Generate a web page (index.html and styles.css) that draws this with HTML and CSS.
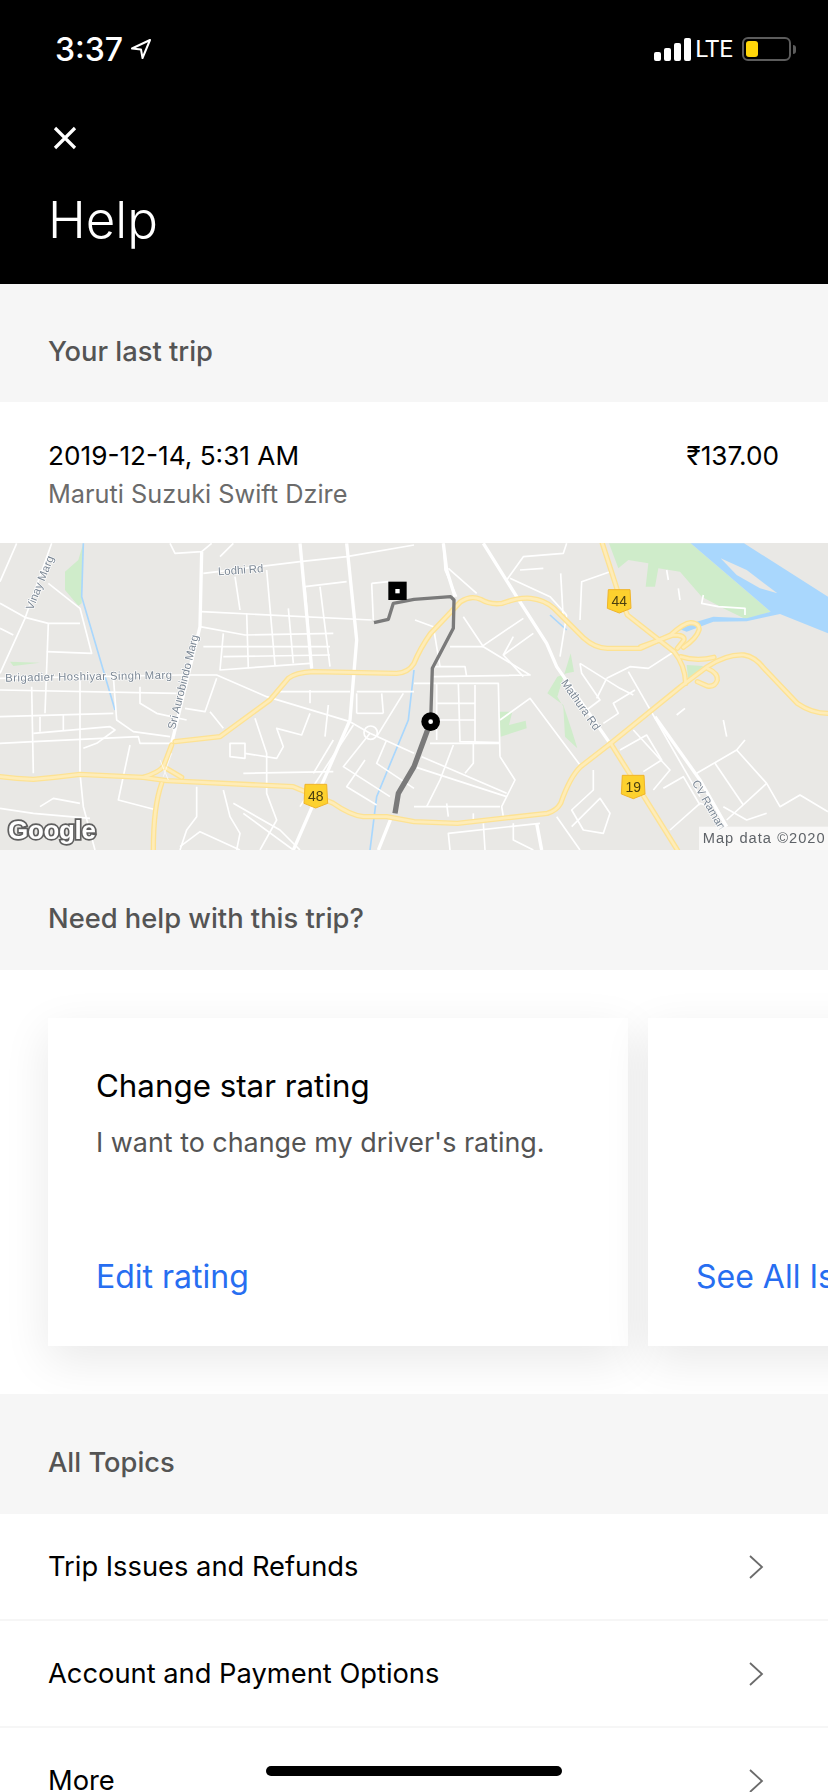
FILE: index.html
```html
<!DOCTYPE html>
<html lang="en">
<head>
    <meta charset="UTF-8">
    <meta name="viewport" content="width=device-width, initial-scale=1.0">
    <title>Help</title>
    <link rel="stylesheet" href="styles.css">
</head>
<body>
    <div class="screen">
        <header class="header">
            <div class="status-bar">
                <div class="status-left">
                    <span class="time">3:37</span>
                    <svg class="location" width="22" height="22" viewBox="0 0 22 22"><path d="M20 2 L2 10.5 L11 11.5 L12.5 20 Z" fill="none" stroke="#fff" stroke-width="2" stroke-linejoin="round"/></svg>
                </div>
                <div class="status-right">
                    <div class="signal">
                        <span class="bar bar-1"></span>
                        <span class="bar bar-2"></span>
                        <span class="bar bar-3"></span>
                        <span class="bar bar-4"></span>
                    </div>
                    <span class="lte">LTE</span>
                    <div class="battery"><span class="battery-level"></span></div>
                    <span class="battery-cap"></span>
                </div>
            </div>
            <svg class="close" width="26" height="26" viewBox="0 0 26 26"><path d="M3 3 L23 23 M23 3 L3 23" stroke="#fff" stroke-width="3.2" fill="none"/></svg>
            <h1 class="title">Help</h1>
        </header>

        <div class="section-head">Your last trip</div>

        <div class="trip">
            <div>
                <div class="trip-date">2019-12-14, 5:31 AM</div>
                <div class="trip-car">Maruti Suzuki Swift Dzire</div>
            </div>
            <div class="trip-price">₹137.00</div>
        </div>

        <svg class="map" width="828" height="307" viewBox="0 9 2484 921">
            <defs>
                <g id="highways">
                    <path d="M0 710 Q50 716 100 718 Q170 712 240 703 L430 712 Q475 698 490 680 L515 615"/>
                    <path d="M430 712 L500 722 L880 740 L1000 790 Q1050 825 1090 830 L1160 830 L1242 845 L1372 850 L1642 820 Q1670 812 1682 790 Q1710 710 1742 680 L1832 610 L2042 440 L2122 380 Q2180 342 2232 345 Q2265 350 2292 385 L2392 490 Q2435 520 2484 520"/>
                    <path d="M525 605 L660 590 L810 480 L865 415 Q885 398 940 395 L1190 400 Q1225 398 1242 370 Q1260 325 1292 280 L1382 185 Q1412 165 1442 178 Q1470 195 1507 190 Q1555 172 1592 175 Q1635 180 1662 205 L1752 295 Q1785 325 1822 325 L1922 325 L2012 285 Q2050 250 2072 248 Q2100 250 2097 270 Q2090 295 2050 322"/>
                    <path d="M485 730 Q460 800 460 930"/>
                    <path d="M490 680 L545 712"/>
                    <path d="M1807 10 L1852 150 L1882 225 L2022 335 Q2055 375 2057 430"/>
                    <path d="M1832 610 L2032 930"/>
                    <path d="M2042 350 Q2090 365 2142 352"/>
                    <path d="M2122 385 Q2155 400 2152 420 Q2145 442 2122 438 L2092 425"/>
                    <path d="M1922 320 L2020 285 Q2055 285 2052 300 L2032 325"/>
                </g>
            </defs>

            <rect x="0" y="0" width="2484" height="940" fill="#e9e8e5"/>

            <!-- parks and water -->
            <g fill="#cfecca">
                <path d="M195 95 L235 60 L250 10 L245 190 L235 197 L195 150 Z"/>
                <path d="M30 365 L120 368 L40 378 Z"/>
                <path d="M1827 10 L2072 10 L2312 215 L2242 240 L2170 205 L2105 170 L2040 95 L1975 85 L1965 140 L1937 140 L1945 70 L1885 60 L1855 85 Z"/>
                <path d="M1497 515 L1537 515 L1527 555 L1577 542 L1580 565 L1502 590 Z"/>
                <path d="M1712 340 L1722 395 L1700 400 L1672 410 L1642 460 L1690 495 L1715 570 L1732 625 L1695 590 L1690 500 L1672 470 Z"/>
                <path d="M2060 375 L2110 378 L2065 420 Z"/>
            </g>
            <g fill="#a9d7fd">
                <path d="M2072 10 L2232 10 L2484 170 L2484 280 L2340 222 L2240 244 L2140 245 L2060 275 L2040 268 L2090 245 L2140 230 L2240 235 L2312 215 Z"/>
            </g>
            <path d="M2162 55 L2240 90 L2332 160 L2280 145 L2210 105 Z" fill="#e9e8e5"/>
            <g fill="none" stroke="#a9d7fd" stroke-width="5">
                <path d="M250 10 L245 170 L345 510"/>
                <path d="M1242 390 L1225 540 L1130 770 L1110 930"/>
                <path d="M1650 225 L1700 270"/>
            </g>

            <!-- small streets -->
            <g fill="none" stroke="#fff" stroke-width="5" stroke-linejoin="round">
                <path d="M0 125 L50 10"/>
                <path d="M0 400 L75 235 L155 10"/>
                <path d="M0 190 L75 232 L145 250 L240 250"/>
                <path d="M0 265 L40 285"/>
                <path d="M145 250 L135 520"/>
                <path d="M145 130 L240 205 L275 340 L140 335"/>
                <path d="M510 10 L525 40 L605 35 L635 10"/>
                <path d="M610 100 L900 65 L1040 50 L1242 15"/>
                <path d="M660 50 L700 10"/>
                <path d="M705 110 L720 210"/>
                <path d="M800 90 L825 375"/>
                <path d="M605 215 L1115 240"/>
                <path d="M915 140 L1040 125"/>
                <path d="M960 140 L990 380"/>
                <path d="M915 140 L935 385"/>
                <path d="M600 260 L735 285 L1000 280"/>
                <path d="M740 220 L745 385"/>
                <path d="M670 280 L660 390 L930 370"/>
                <path d="M610 320 L990 320"/>
                <path d="M670 350 L990 345"/>
                <path d="M865 205 L880 370"/>
                <path d="M1115 130 L1120 240"/>
                <path d="M1115 130 L1165 125"/>
                <path d="M0 450 L530 460"/>
                <path d="M0 415 L540 405 L650 405 L800 470 L1050 545 L1110 580 L1242 640"/>
                <path d="M650 415 L615 515 L555 505"/>
                <path d="M240 400 L240 700 L250 800 L285 930"/>
                <path d="M95 440 L100 700"/>
                <path d="M340 410 L350 540 L400 575 L510 590"/>
                <path d="M420 440 L420 490 L470 520 L560 540"/>
                <path d="M0 530 L340 520"/>
                <path d="M100 580 L330 560 L345 570 L290 610 L250 625"/>
                <path d="M100 605 L415 590 L420 610 L510 610"/>
                <path d="M120 530 L120 575"/>
                <path d="M190 525 L190 570"/>
                <path d="M0 610 L100 605"/>
                <path d="M390 615 L355 780 L470 810"/>
                <path d="M0 805 L100 820 L270 835"/>
                <path d="M120 800 L160 775 L240 790"/>
                <path d="M630 515 L670 565"/>
                <path d="M765 535 L800 640 L800 760 L830 840 L780 930"/>
                <path d="M690 610 L735 610 L735 655 L690 650 Z"/>
                <path d="M735 640 L830 655 L850 620 L830 565 L905 585 L930 520"/>
                <path d="M730 700 L1000 695"/>
                <path d="M590 740 L590 830 L560 870 L540 930"/>
                <path d="M670 750 L690 830 L720 880 L710 930"/>
                <path d="M700 790 L840 870 L900 930"/>
                <path d="M730 820 L880 930"/>
                <path d="M540 920 L600 875 L720 930"/>
                <path d="M1000 600 L940 700"/>
                <path d="M1060 555 L900 800"/>
                <path d="M1110 580 L1030 680 L1170 770"/>
                <path d="M1095 660 L1040 740 L1130 795"/>
                <path d="M1160 600 L1130 670 L1242 745"/>
                <path d="M1070 455 L1242 455"/>
                <path d="M1070 520 L1150 520"/>
                <path d="M1070 460 L1070 520"/>
                <path d="M1145 460 L1150 520"/>
                <path d="M1210 460 L1130 590"/>
                <circle cx="1112" cy="578" r="20"/>
                <path d="M930 450 L930 490"/>
                <path d="M985 495 L975 590"/>
                <path d="M840 455 L1050 455"/>

                <path d="M1330 10 L1335 90 L1370 170"/>
                <path d="M1345 85 L1430 160"/>
                <path d="M1520 120 L1570 50 L1690 40 L1700 10"/>
                <path d="M1560 90 L1630 85"/>
                <path d="M1530 115 L1650 170 L1700 225"/>
                <path d="M1682 100 L1690 240"/>
                <path d="M1700 225 L1680 350"/>
                <path d="M1740 240 L1745 125 L1830 95"/>
                <path d="M1245 240 L1300 260 L1320 380"/>
                <path d="M1390 230 L1450 320 L1590 405 L1300 410"/>
                <path d="M1570 235 L1445 320"/>
                <path d="M1600 280 L1510 345 L1570 410"/>
                <path d="M1510 345 L1540 290"/>
                <path d="M1350 320 L1450 320"/>
                <path d="M1300 380 L1395 380 L1400 410"/>
                <path d="M1242 430 L1495 430 L1500 650"/>
                <path d="M1310 430 L1310 600"/>
                <path d="M1375 430 L1380 605 L1500 608"/>
                <path d="M1425 435 L1425 605"/>
                <path d="M1310 490 L1425 490"/>
                <path d="M1310 540 L1425 540"/>
                <path d="M1290 610 L1500 610"/>
                <path d="M1500 540 L1590 475 L1740 675"/>
                <path d="M1242 680 L1520 770"/>
                <path d="M1265 650 L1520 760"/>
                <path d="M1360 615 L1320 720 L1280 800"/>
                <path d="M1420 610 L1420 670 L1395 700"/>
                <path d="M1500 650 L1545 720 L1505 800 L1510 830"/>
                <path d="M1242 800 L1500 800"/>
                <path d="M1340 790 L1345 830"/>
                <path d="M1420 820 L1420 840"/>
                <path d="M1350 930 L1345 880 L1620 850"/>
                <path d="M1450 850 L1455 930"/>
                <path d="M1540 850 L1540 900 L1600 930"/>
                <path d="M1670 830 L1740 930"/>
                <path d="M1715 860 L1800 775 L1830 820 L1810 880 L1750 870 L1715 810 L1780 750 L1780 690"/>
                <path d="M1740 370 L1860 445 L1900 465"/>
                <path d="M1740 370 L1745 400 L1800 480 L1760 510"/>
                <path d="M1820 415 L1890 380 L1945 385 L2030 330"/>
                <path d="M1905 450 L1840 490 L1855 520 L1810 550"/>
                <path d="M1820 415 L1790 475"/>
                <path d="M1885 395 L2100 770"/>
                <path d="M1860 630 L1940 585 L1985 660 L1930 695"/>
                <path d="M1900 570 L2010 690 L1960 750"/>
                <path d="M1990 745 L2050 710 L2100 795"/>
                <path d="M2090 700 L2210 630 L2300 730 L2340 800 L2400 765 L2484 815"/>
                <path d="M2145 670 L2230 795"/>
                <path d="M2180 840 L2300 730"/>
                <path d="M2170 800 L2240 840 L2300 820"/>
                <path d="M2010 870 L2100 790 L2130 800"/>
                <path d="M2210 630 L2235 600"/>
                <path d="M2170 540 L2180 590"/>
                <path d="M2030 525 L2055 505"/>
                <path d="M2000 90 L2005 120"/>
                <path d="M2035 145 L2040 180"/>
                <path d="M2110 165 L2105 190 L2155 200 L2235 205 L2235 225"/>
            </g>

            <!-- main streets -->
            <g fill="none" stroke="#fff" stroke-width="10" stroke-linejoin="round">
                <path d="M605 35 L600 260 L515 610"/>
                <path d="M900 10 L935 385"/>
                <path d="M1040 10 L1070 300 L1050 540 L880 930"/>
                <path d="M1175 830 L1135 930"/>
                <path d="M1330 10 L1340 90 L1365 170"/>
                <path d="M1450 10 L1550 170 L1640 310 L1670 380 L1830 610"/>
                <path d="M1965 530 L2100 720 L2180 860"/>
                <path d="M1610 850 L1625 930"/>
            </g>

            <!-- highways -->
            <use href="#highways" fill="none" stroke="#fde293" stroke-width="16" stroke-linejoin="round" stroke-linecap="round"/>
            <use href="#highways" fill="none" stroke="#feecb8" stroke-width="8" stroke-linejoin="round" stroke-linecap="round"/>
            <g fill="none" stroke="#fff" stroke-width="3" opacity="0.7">
                <path d="M480 660 L505 720"/>
                <path d="M515 640 L490 710"/>
            </g>

            <!-- road labels -->
            <g class="map-label" font-size="34">
                <text x="655" y="106" transform="rotate(-4 655 106)">Lodhi Rd</text>
                <text x="98" y="212" transform="rotate(-68 98 212)">Vinay Marg</text>
                <text x="16" y="425" transform="rotate(-1 16 425)" textLength="500">Brigadier Hoshiyar Singh Marg</text>
                <text x="525" y="570" transform="rotate(-76 525 570)">Sri Aurobindo Marg</text>
                <text x="1682" y="428" transform="rotate(55 1682 428)">Mathura Rd</text>
                <text x="2075" y="728" transform="rotate(60 2075 728)">CV Raman</text>
            </g>

            <!-- route -->
            <g fill="none" stroke="#7a7a7a" stroke-linejoin="round">
                <path d="M1122 248 L1165 238 L1180 190 L1242 178 L1352 170 L1362 180 L1360 265 L1297 385 L1292 545" stroke-width="10"/>
                <path d="M1292 545 L1242 680 L1195 760 L1185 820" stroke-width="16"/>
            </g>
            <rect x="1165" y="125" width="55" height="55" fill="#000"/>
            <rect x="1186" y="147" width="13" height="13" fill="#fff"/>
            <circle cx="1292" cy="545" r="28" fill="#000"/>
            <circle cx="1292" cy="545" r="7" fill="#fff"/>

            <!-- highway shields -->
            <g font-size="42" text-anchor="middle" class="shield-text">
                <path d="M915 733 L980 733 L983 790 L947 804 L912 790 Z" fill="#fdd12e" stroke="#f0b429" stroke-width="3" stroke-linejoin="round"/>
                <text x="947" y="784">48</text>
                <path d="M1825 149 L1890 149 L1893 205 L1858 219 L1822 205 Z" fill="#fdd12e" stroke="#f0b429" stroke-width="3" stroke-linejoin="round"/>
                <text x="1858" y="199">44</text>
                <path d="M1867 706 L1932 706 L1935 762 L1900 776 L1864 762 Z" fill="#fdd12e" stroke="#f0b429" stroke-width="3" stroke-linejoin="round"/>
                <text x="1900" y="756">19</text>
            </g>

            <text class="map-google" x="24" y="897" font-size="78" textLength="264">Google</text>
            <rect x="2097" y="860" width="387" height="70" fill="#fff" opacity="0.7"/>
            <text class="map-credit" x="2108" y="910" font-size="44" textLength="366">Map data ©2020</text>
        </svg>

        <div class="section-head section-head-tall">Need help with this trip?</div>

        <div class="carousel">
            <div class="card">
                <div>
                    <div class="card-title">Change star rating</div>
                    <div class="card-text">I want to change my driver's rating.</div>
                </div>
                <div class="card-link">Edit rating</div>
            </div>
            <div class="card card-next">
                <div></div>
                <div class="card-link">See All Issues</div>
            </div>
        </div>

        <div class="section-head section-head-tall">All Topics</div>

        <div class="topics">
            <div class="topic">
                <span>Trip Issues and Refunds</span>
                <svg width="16" height="24" viewBox="0 0 16 24"><path d="M2 1 L14 12 L2 23" fill="none" stroke="#6b6b6b" stroke-width="1.8"/></svg>
            </div>
            <div class="topic">
                <span>Account and Payment Options</span>
                <svg width="16" height="24" viewBox="0 0 16 24"><path d="M2 1 L14 12 L2 23" fill="none" stroke="#6b6b6b" stroke-width="1.8"/></svg>
            </div>
            <div class="topic">
                <span>More</span>
                <svg width="16" height="24" viewBox="0 0 16 24"><path d="M2 1 L14 12 L2 23" fill="none" stroke="#6b6b6b" stroke-width="1.8"/></svg>
            </div>
        </div>

        <div class="home-bar"></div>
    </div>
</body>
</html>
```

FILE: styles.css
```css
* {
    box-sizing: border-box;
}

html, body {
    margin: 0;
    padding: 0;
    background: #fff;
}

body {
    font-family: "Inter", "Roboto", "Liberation Sans", sans-serif;
    color: #000;
}

.screen {
    position: relative;
    width: 828px;
    height: 1792px;
    overflow: hidden;
}

.header {
    height: 284px;
    background: #000;
    color: #fff;
    padding: 34px 32px 0 48px;
}

.status-bar {
    display: flex;
    justify-content: space-between;
    align-items: center;
    height: 30px;
    padding-left: 7px;
}

.status-left {
    display: flex;
    align-items: center;
    gap: 7px;
}

.time {
    font-size: 32px;
    font-weight: 500;
    letter-spacing: 0;
}

.status-right {
    display: flex;
    align-items: center;
}

.signal {
    display: flex;
    align-items: flex-end;
    gap: 3px;
    height: 24px;
}

.bar {
    width: 7px;
    background: #fff;
    border-radius: 2px;
}

.bar-1 { height: 9px; }
.bar-2 { height: 13px; }
.bar-3 { height: 18px; }
.bar-4 { height: 23px; }

.lte {
    font-family: "Roboto", sans-serif;
    font-size: 24px;
    margin: 0 9px 0 4px;
}

.battery {
    width: 49px;
    height: 24px;
    border: 2px solid #5c5c5c;
    border-radius: 6px;
    padding: 2px;
}

.battery-level {
    display: block;
    width: 12px;
    height: 16px;
    background: #ffd60a;
    border-radius: 3px;
}

.battery-cap {
    width: 3px;
    height: 9px;
    margin-left: 2px;
    background: #5c5c5c;
    border-radius: 0 3px 3px 0;
}

.close {
    display: block;
    margin-top: 61px;
    margin-left: 4px;
}

.title {
    margin: 38px 0 0;
    font-size: 51px;
    font-weight: 300;
    line-height: 62px;
}

.section-head {
    display: flex;
    align-items: center;
    height: 118px;
    padding: 16px 0 0 48px;
    background: #f6f6f6;
    color: #545454;
    font-size: 27.3px;
    font-weight: 500;
}

.section-head-tall {
    height: 120px;
}

.trip {
    display: flex;
    justify-content: space-between;
    height: 141px;
    padding: 36px 49px 0 48px;
}

.trip-date,
.trip-price {
    font-size: 26.2px;
    line-height: 36px;
}

.trip-car {
    margin-top: 2px;
    font-size: 25.3px;
    line-height: 36px;
    color: #6b6b6b;
}

.map {
    display: block;
    filter: blur(0.7px);
}

.map-label {
    font-family: "Liberation Sans", sans-serif;
    fill: #7b8794;
    stroke: #fff;
    stroke-width: 4;
    paint-order: stroke;
}

.shield-text {
    font-family: "Liberation Sans", sans-serif;
    fill: #4a3f10;
}

.map-google {
    font-family: "Liberation Sans", sans-serif;
    font-weight: 700;
    fill: #fff;
    stroke: #5f5f5f;
    stroke-width: 10;
    paint-order: stroke;
}

.map-credit {
    font-family: "Liberation Sans", sans-serif;
    fill: #5f6368;
}

.carousel {
    display: flex;
    gap: 20px;
    height: 424px;
    padding: 48px 0 48px 48px;
    background: #fff;
    overflow: hidden;
}

.card {
    flex: 0 0 580px;
    display: flex;
    flex-direction: column;
    justify-content: space-between;
    height: 328px;
    padding: 48px 48px 49px;
    background: #fff;
    box-shadow: 0 14px 44px rgba(0, 0, 0, 0.09);
}

.card-title {
    font-size: 31.3px;
    line-height: 40px;
}

.card-text {
    margin-top: 17px;
    font-size: 26.9px;
    line-height: 38px;
    color: #545454;
}

.card-link {
    font-size: 32px;
    line-height: 40px;
    color: #276ef1;
    white-space: nowrap;
}

.topic {
    display: flex;
    justify-content: space-between;
    align-items: center;
    height: 107px;
    padding: 0 64px 0 48px;
    border-bottom: 2px solid #f6f6f6;
    font-size: 27.3px;
}

.home-bar {
    position: absolute;
    left: 266px;
    top: 1766px;
    width: 296px;
    height: 10px;
    background: #000;
    border-radius: 5px;
}
```
